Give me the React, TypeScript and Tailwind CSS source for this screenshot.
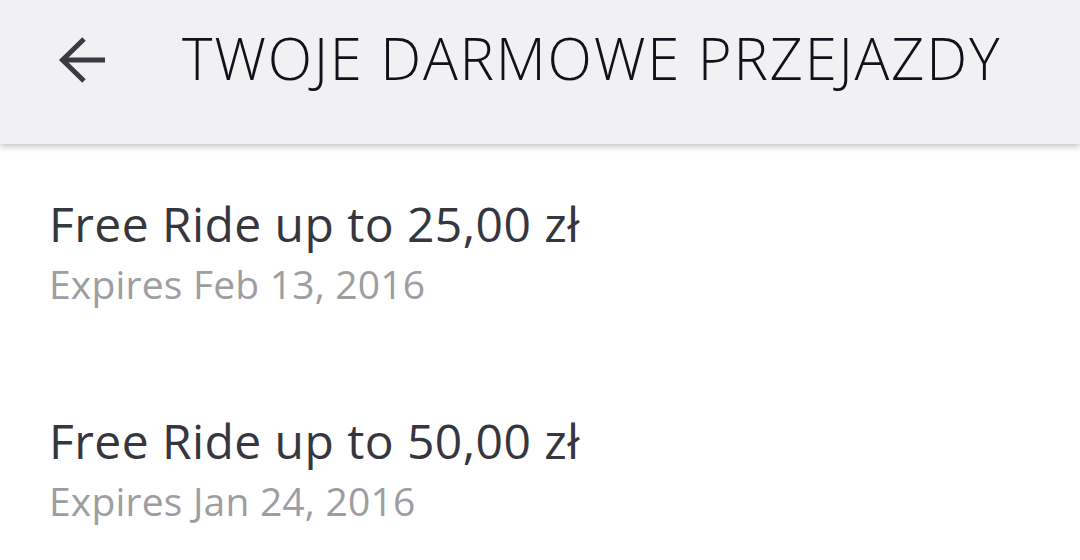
const rides = [
  { amount: "25,00 zł", expires: "Feb 13, 2016" },
  { amount: "50,00 zł", expires: "Jan 24, 2016" },
];

function BackArrow() {
  return (
    <svg width="48" height="48" viewBox="0 0 48 48" fill="none" stroke="currentColor" strokeWidth="5">
      <path d="M4 24H47" />
      <path d="M26 3L4.5 24L26 45" strokeLinejoin="miter" />
    </svg>
  );
}

export default function App() {
  return (
    <div className="w-[1080px] h-[560px] overflow-hidden bg-white font-['Open_Sans',sans-serif]">
      {/* Toolbar */}
      <div className="relative z-10 h-[144px] bg-[#f1f1f3] flex items-start shadow-[0_3px_6px_rgba(0,0,0,0.22)]">
        <button className="ml-[58px] mt-[36px] text-[#3a3a44]">
          <BackArrow />
        </button>
        <h1 className="ml-[76px] mt-[29px] text-[58px] font-light tracking-[0.03em] leading-[58px] text-[#11111c]">
          TWOJE DARMOWE PRZEJAZDY
        </h1>
      </div>

      {/* Free ride list */}
      <div className="pl-[49px] pt-[50px] flex flex-col gap-[97px]">
        {rides.map((ride) => (
          <div key={ride.amount}>
            <div className="text-[48px] leading-[60px] tracking-[0.009em] text-[#36363f]">
              Free Ride up to {ride.amount}
            </div>
            <div className="text-[39px] leading-[60px] tracking-[0.005em] text-[#9d9da2]">
              Expires {ride.expires}
            </div>
          </div>
        ))}
      </div>
    </div>
  );
}
